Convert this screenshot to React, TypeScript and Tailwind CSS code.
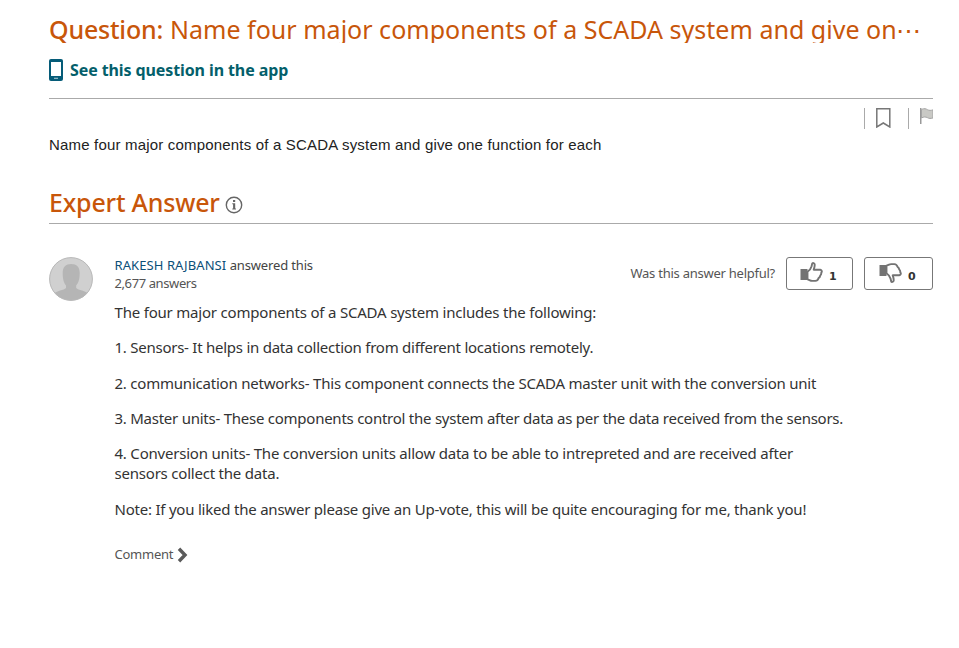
import React from "react";

const THUMB =
  "M7.5 9.800C9.500 8.500 11 6.300 11.600 4.200L12.100 1.900C12.500.6 14.600.9 14.700 2.600C14.800 4.600 14.200 6.200 13.700 7.700L20.300 7.700C22 8 22.200 9.700 21.300 10.600C21.500 12 20.900 12.900 20.200 13.600C20.100 15 19.400 15.700 18.500 16.200C18 17.800 17 18.800 15.400 18.900L12.200 18.900C10.400 18.900 9.300 17.800 7.500 17.300Z";

function Thumb({ down = false }: { down?: boolean }) {
  return (
    <svg width="23" height="21" viewBox="0 0 23 21" className={down ? "-scale-y-100" : ""}>
      <path d="M0.5 7h7v11h-7z" fill="#737373" />
      <path d={THUMB} fill="none" stroke="#737373" strokeWidth="1.9" strokeLinejoin="round" />
    </svg>
  );
}

const PARAGRAPHS = [
  { text: "The four major components of a SCADA system includes the following:", cls: "mb-[15px] tracking-[-0.2px]" },
  { text: "1. Sensors- It helps in data collection from different locations remotely.", cls: "mb-4 tracking-[-0.25px]" },
  { text: "2. communication networks- This component connects the SCADA master unit with the conversion unit", cls: "mb-[15px] tracking-[-0.22px]" },
  { text: "3. Master units- These components control the system after data as per the data received from the sensors.", cls: "mb-[15px] tracking-[-0.25px]" },
];

export default function App() {
  return (
    <main className="h-[648px] w-[959px] overflow-hidden bg-white pr-[26px] pl-[49px] font-['Noto_Sans',sans-serif] text-[#333]">
      <header className="h-[99px] border-b border-[#aaa] pt-[12px]">
        <h1 className="flex h-[31px] overflow-hidden text-[25px] leading-[35px] whitespace-nowrap text-[#c8560a]">
          <span className="w-[121px] font-medium tracking-[-0.2px]">Question:</span>
          <span className="tracking-[0.02px]">Name four major components of a SCADA system and give on</span>
          <span className="-ml-px">⋯</span>
        </h1>
        <a className="mt-[15px] flex h-6 items-center text-[16px] font-bold text-[#045f6b]">
          <svg width="14" height="22" viewBox="0 0 14 22" className="mr-[7px]">
            <rect width="14" height="22" rx="2" fill="#055c78" />
            <path d="M2 3h10v14H2z" fill="#fff" />
            <path d="M5 18.7h4v1.3H5z" fill="#8fb5c2" />
          </svg>
          <span className="tracking-[-0.1px] whitespace-nowrap">See this question in the app</span>
        </a>
      </header>

      <div className="flex h-[36px] justify-end pt-[9px]">
        <div className="flex h-[21px] w-[44px] border-l border-[#aaa] pl-[11px]">
          <svg width="15" height="20" viewBox="0 0 15 20">
            <path d="M.8.8h13v18.200L7.300 15 .8 19z" fill="none" stroke="#777" strokeWidth="1.5" />
          </svg>
        </div>
        <div className="flex h-[21px] w-[25px] border-l border-[#aaa] pl-[11px]">
          <svg width="13" height="17" viewBox="0 0 13 17">
            <path d="M.7 0v16" stroke="#999" strokeWidth="1.6" />
            <path d="M1.500 1.400C4.500 0 6 .8 7.500 1.700c1.600.9 3.500.8 5.500.2v8c-2.200.8-4 .7-5.500-.2C5.500 8.700 4 8.800 1.500 9.900z" fill="#c9c9c5" stroke="#a5a5a5" />
          </svg>
        </div>
      </div>
      <p className="h-[20px] font-['Liberation_Sans',Arial,sans-serif] text-[15px] leading-[20px] tracking-[0.185px] whitespace-nowrap text-[#222]">
        Name four major components of a SCADA system and give one function for each
      </p>

      <section className="mt-[28px] flex h-[41px] border-b border-[#aaa]">
        <h2 className="text-[25px] leading-[38px] font-medium tracking-[-0.2px] whitespace-nowrap text-[#c8560a]">Expert Answer</h2>
        <svg width="18" height="18" viewBox="0 0 18 18" className="mt-[13px] ml-[5px]">
          <circle cx="9" cy="9" r="7.700" fill="none" stroke="#666" strokeWidth="1.400" />
          <path d="M8 4h2.200v2H8zM7.300 7.300h2.900v5.300h.8v1H7.300v-1h.8V8.300h-.8z" fill="#666" />
        </svg>
      </section>

      <article className="flex pt-[32px]">
        <svg width="44" height="44" viewBox="0 0 44 44" className="mt-[1px] mr-[21.500px] shrink-0">
          <defs>
            <clipPath id="avatar"><circle cx="22" cy="22" r="21.500" /></clipPath>
          </defs>
          <g clipPath="url(#avatar)">
            <path d="M0 0h44v44H0z" fill="#d0d0d0" />
            <path d="M13.700 16c0-6 3-9 8.500-9s8.500 3 8.500 9c0 7-1.500 10-3.500 12.500v2.500c2 2.500 9 2 14 7v7H3v-7c5-5 12-4.500 14-7v-2.500c-2-2.500-3.300-5.500-3.300-12.500z" fill="#b5b5b5" />
          </g>
          <circle cx="22" cy="22" r="21.400" fill="none" stroke="#b8b8b8" />
        </svg>

        <div className="min-w-0 flex-1">
          <div className="flex h-[46px]">
            <div className="flex-1 text-[13px] leading-[18px] whitespace-nowrap text-[#555]">
              <p className="tracking-[-0.05px]"><span className="tracking-[0.08px] text-[#0b4f78]">RAKESH RAJBANSI</span> <span className="tracking-[-0.15px] text-[#444]">answered this</span></p>
              <p className="tracking-[-0.4px]">2,677 answers</p>
            </div>
            <span className="mr-[11px] pt-[8px] text-[13px] leading-[18px] tracking-[-0.25px] whitespace-nowrap text-[#555]">Was this answer helpful?</span>
            <button className="mt-px flex h-[33px] w-[67px] rounded-[3px] border border-[#777] pt-[4px] pl-[13px]">
              <Thumb />
              <b className="mt-[6px] ml-[6px] font-['DejaVu_Sans',sans-serif] text-[11px] leading-[18px]">1</b>
            </button>
            <button className="mt-px ml-[11px] flex h-[33px] w-[69px] rounded-[3px] border border-[#777] pt-[4px] pl-[14px]">
              <Thumb down />
              <b className="mt-[6px] ml-[6px] font-['DejaVu_Sans',sans-serif] text-[11px] leading-[18px]">0</b>
            </button>
          </div>
          <div className="text-[15px] leading-[20px] whitespace-nowrap">
            {PARAGRAPHS.map((p) => <p key={p.text} className={p.cls}>{p.text}</p>)}
            <p className="mb-4 tracking-[-0.21px]">
              <span>4. Conversion units- The conversion units allow data to be able to intrepreted and are received after</span>
              <br />
              <span>sensors collect the data.</span>
            </p>
            <p className="tracking-[-0.22px]">Note: If you liked the answer please give an Up-vote, this will be quite encouraging for me, thank you!</p>
          </div>
          <div className="mt-[27px] flex h-[18px] items-center text-[13px] text-[#555]">
            <span className="tracking-[-0.25px]">Comment</span>
            <svg width="11" height="16" viewBox="0 0 11 16" className="ml-[4px]">
              <path d="M2 1.800 8 8l-6 6.200" fill="none" stroke="#5a5a5a" strokeWidth="3.400" />
            </svg>
          </div>
        </div>
      </article>
    </main>
  );
}
